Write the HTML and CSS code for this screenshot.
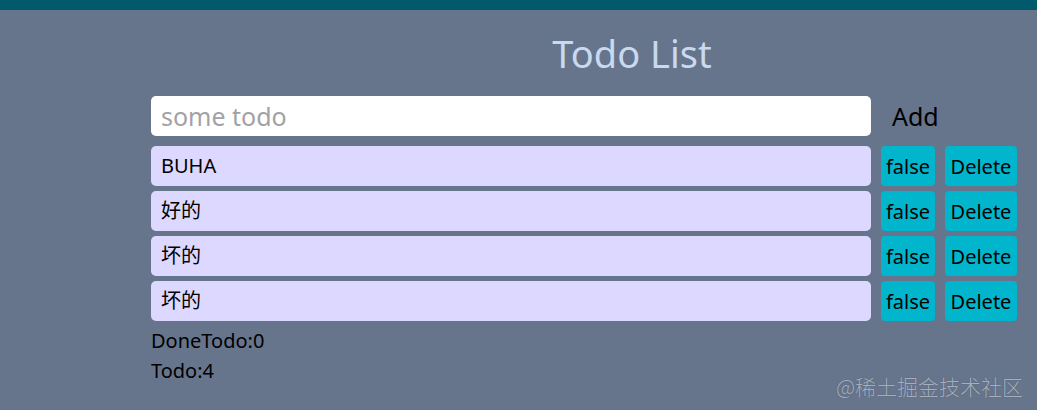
FILE: index.html
```html
<!DOCTYPE html>
<html>
<head>
<meta charset="utf-8">
<link rel="stylesheet" href="styles.css">
</head>
<body>
<div class="topbar"></div>
<div class="app">
  <h1 class="title">Todo List</h1>
  <div class="add-row">
    <input class="todo-input" placeholder="some todo">
    <span class="add">Add</span>
  </div>
  <div class="list">
    <div class="item"><div class="item-text">BUHA</div><button class="btn btn-done">false</button><button class="btn btn-del">Delete</button></div>
    <div class="item"><div class="item-text">好的</div><button class="btn btn-done">false</button><button class="btn btn-del">Delete</button></div>
    <div class="item"><div class="item-text">坏的</div><button class="btn btn-done">false</button><button class="btn btn-del">Delete</button></div>
    <div class="item"><div class="item-text">坏的</div><button class="btn btn-done">false</button><button class="btn btn-del">Delete</button></div>
  </div>
  <div class="stats">
    <div>DoneTodo:0</div>
    <div>Todo:4</div>
  </div>
</div>
<div class="watermark">@稀土掘金技术社区</div>
</body>
</html>
```
FILE: styles.css
```css
html, body {
  margin: 0;
  padding: 0;
}
body {
  background: #66758c;
  width: 1037px;
  height: 410px;
  overflow: hidden;
  font-family: "Noto Sans", "Noto Sans CJK SC", sans-serif;
  position: relative;
}
.topbar {
  height: 10px;
  background: #005a6b;
}
.app {
  width: 866px;
  padding-left: 151px;
}
.title {
  margin: 0;
  padding-top: 21px;
  padding-left: 96px;
  height: 65px;
  box-sizing: border-box;
  text-align: center;
  font-weight: 400;
  font-size: 38px;
  line-height: 44px;
  color: #c9d9ef;
}
.add-row {
  display: flex;
  align-items: center;
  margin-top: 21px;
}
.todo-input {
  width: 720px;
  height: 40px;
  box-sizing: border-box;
  border: none;
  border-radius: 5px;
  background: #fff;
  padding: 0 10px;
  font-family: inherit;
  font-size: 25px;
  outline: none;
}
.todo-input::placeholder {
  color: #a2a2a6;
}
.add {
  margin-left: 21px;
  font-size: 25px;
  color: #000;
}
.list {
  display: flex;
  flex-direction: column;
  gap: 5px;
  margin-top: 10px;
}
.item {
  display: flex;
  gap: 10px;
  height: 40px;
}
.item-text {
  width: 720px;
  box-sizing: border-box;
  background: #ddd8ff;
  border-radius: 5px;
  padding: 0 10px;
  font-size: 20px;
  line-height: 40px;
  color: #000;
}
.btn {
  border: none;
  border-radius: 4px;
  background: #00b5cc;
  font-family: inherit;
  font-size: 20px;
  color: #000;
  padding: 0;
  height: 40px;
}
.btn-done { width: 54px; }
.btn-del { width: 72px; }
.stats {
  margin-top: 5px;
  font-size: 20px;
  line-height: 30px;
  color: #000;
}
.watermark {
  position: absolute;
  left: 836px;
  top: 371px;
  font-size: 21px;
  font-weight: 300;
  color: #a4aebd;
  text-shadow: 0 0 1px #4a5566;
  font-family: "Noto Sans CJK SC", sans-serif;
}
```
